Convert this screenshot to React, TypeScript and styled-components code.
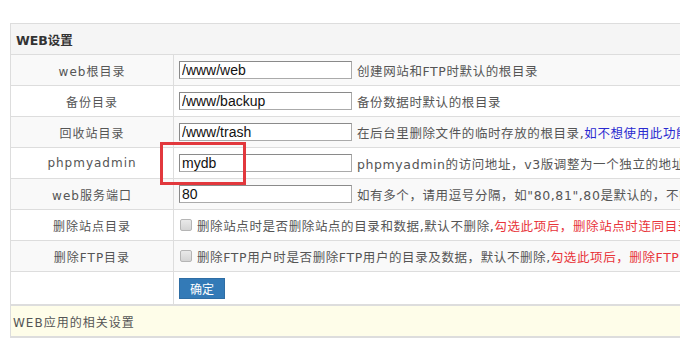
import React from "react";
import styled, { createGlobalStyle } from "styled-components";

const GlobalStyle = createGlobalStyle`
  html, body { margin: 0; padding: 0; background: #fff; overflow: hidden; }
  * { box-sizing: border-box; }
`;

const CJK = `"DejaVu Sans", "Noto Sans CJK SC", sans-serif`;

const Page = styled.div`
  width: 680px;
  height: 348px;
  overflow: hidden;
  padding: 23px 0 0 10px;
`;

const Panel = styled.section`
  position: relative;
  width: 1000px;
  border: 1px solid #ddd;
  border-right: none;
  font-family: ${CJK};
  color: #555;
`;

const Heading = styled.div`
  height: 31px;
  display: flex;
  align-items: center;
  padding-left: 5px;
  background: #f5f5f5;
  border-bottom: 1px solid #ddd;
  font-size: 12.5px;
  font-weight: bold;
  color: #333;
`;

const Row = styled.div<{ $striped?: boolean; $tall?: boolean; $heavy?: boolean }>`
  display: grid;
  grid-template-columns: 163px 1fr;
  height: ${(p) => (p.$tall ? "34px" : "31px")};
  background: ${(p) => (p.$striped ? "#f9f9f9" : "#fff")};
  border-bottom: ${(p) => (p.$heavy ? "2px" : "1px")} solid #ddd;
`;

const Label = styled.div`
  display: flex;
  align-items: center;
  justify-content: center;
  border-right: 1px solid #ddd;
  font-size: 12px;
  letter-spacing: 1px;
  color: #555;
  white-space: nowrap;
`;

const Value = styled.div`
  display: flex;
  align-items: center;
  gap: 5px;
  padding-left: 5px;
  white-space: nowrap;
`;

const TextInput = styled.input`
  width: 173px;
  height: 18px;
  padding: 0 2px;
  margin: 0;
  border: 1px solid #aaa;
  border-top-color: #8a8a8a;
  border-left-color: #8a8a8a;
  background: #fff;
  font-family: "Liberation Sans", Arial, sans-serif;
  font-size: 14px;
  color: #111;
  outline: none;
`;

const Desc = styled.span`
  font-size: 12.5px;
  letter-spacing: 0.6px;
  color: #555;
`;

const Note = styled.span<{ $tone: "blue" | "red" }>`
  color: ${(p) => (p.$tone === "blue" ? "#2a2ad0" : "#e8343a")};
`;

const Check = styled.input`
  appearance: none;
  width: 12px;
  height: 12px;
  margin: 0 0 0 1px;
  border: 1px solid #b5b5b5;
  border-radius: 2px;
  background: linear-gradient(#e9e9e9, #d4d4d4);
`;

const SubmitButton = styled.button`
  width: 46px;
  height: 21px;
  margin: 0;
  padding: 0;
  border: 1px solid #2e6da4;
  background: #337ab7;
  color: #fff;
  font-family: ${CJK};
  font-size: 12px;
`;

const Footer = styled.div`
  height: 31px;
  display: flex;
  align-items: center;
  padding-left: 2px;
  background: #fefde9;
  border-bottom: 1px solid #ddd;
  font-size: 12px;
  letter-spacing: 1px;
  color: #555;
`;

const Highlight = styled.div`
  position: absolute;
  left: 149px;
  top: 118px;
  width: 86px;
  height: 43px;
  border: 3px solid #e2383d;
  pointer-events: none;
`;

type Field = { label: string; value: string; desc: React.ReactNode };

const fields: Field[] = [
  { label: "web根目录", value: "/www/web", desc: "创建网站和FTP时默认的根目录" },
  { label: "备份目录", value: "/www/backup", desc: "备份数据时默认的根目录" },
  {
    label: "回收站目录",
    value: "/www/trash",
    desc: (
      <>
        在后台里删除文件的临时存放的根目录,<Note $tone="blue">如不想使用此功能，请留空</Note>
      </>
    ),
  },
  { label: "phpmyadmin", value: "mydb", desc: "phpmyadmin的访问地址，v3版调整为一个独立的地址" },
  { label: "web服务端口", value: "80", desc: "如有多个，请用逗号分隔，如\"80,81\",80是默认的，不能删除" },
];

const checks = [
  {
    label: "删除站点目录",
    desc: "删除站点时是否删除站点的目录和数据,默认不删除,",
    warn: "勾选此项后，删除站点时连同目录一起删除",
  },
  {
    label: "删除FTP目录",
    desc: "删除FTP用户时是否删除FTP用户的目录及数据，默认不删除,",
    warn: "勾选此项后，删除FTP时连同目录一起删除",
  },
];

export default function App() {
  return (
    <Page>
      <GlobalStyle />
      <Panel>
        <Heading>WEB设置</Heading>
        {fields.map((f, i) => (
          <Row key={f.label} $striped={i % 2 === 0}>
            <Label>{f.label}</Label>
            <Value>
              <TextInput type="text" defaultValue={f.value} readOnly />
              <Desc>{f.desc}</Desc>
            </Value>
          </Row>
        ))}
        {checks.map((c, i) => (
          <Row key={c.label} $striped={(fields.length + i) % 2 === 0}>
            <Label>{c.label}</Label>
            <Value>
              <Check type="checkbox" />
              <Desc>
                {c.desc}
                <Note $tone="red">{c.warn}</Note>
              </Desc>
            </Value>
          </Row>
        ))}
        <Row $tall $heavy>
          <Label />
          <Value>
            <SubmitButton type="button">确定</SubmitButton>
          </Value>
        </Row>
        <Footer>WEB应用的相关设置</Footer>
        <Highlight />
      </Panel>
    </Page>
  );
}
